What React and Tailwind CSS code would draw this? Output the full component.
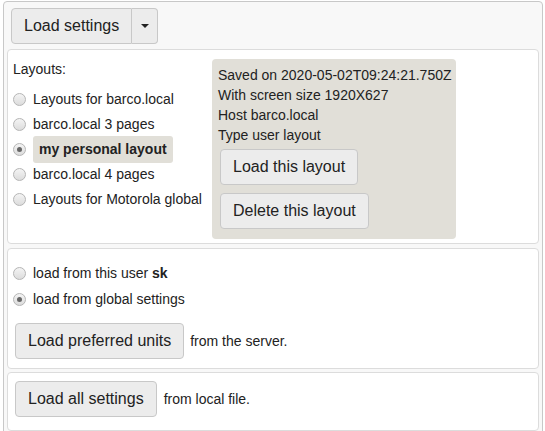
import React, { useState } from 'react';

const Radio = ({ checked }) => (
  <span className="flex h-[13px] w-[13px] shrink-0 items-center justify-center rounded-full border border-[#b5b5b5] bg-gradient-to-b from-[#f4f4f4] to-[#dcdcdc]">
    {checked && <span className="h-[5px] w-[5px] rounded-full bg-[#666]" />}
  </span>
);

const Btn = ({ children, className = '' }) => (
  <button
    className={`h-[36px] whitespace-nowrap rounded-[4px] border border-[#c8c8c8] bg-[#ececec] px-[12px] text-[16px] text-[#222] ${className}`}
  >
    {children}
  </button>
);

const layouts = [
  'Layouts for barco.local',
  'barco.local 3 pages',
  'my personal layout',
  'barco.local 4 pages',
  'Layouts for Motorola global',
];

export default function App() {
  const [sel, setSel] = useState(2);
  const [src, setSrc] = useState(1);

  return (
    <div
      className="ml-[3px] mt-[1px] h-[440px] w-[540px] rounded-[4px] border border-[#c8c8c8] bg-[#f8f8f8] text-[14px] text-[#222]"
      style={{ fontFamily: '"Liberation Sans", Arial, sans-serif' }}
    >
      {/* toolbar */}
      <div className="flex pl-[7px] pt-[6px]">
        <button className="h-[36px] rounded-l-[4px] border border-[#c8c8c8] bg-[#ececec] px-[12px] text-[16px]">
          Load settings
        </button>
        <button className="flex h-[36px] w-[26px] items-center justify-center rounded-r-[4px] border border-l-0 border-[#c8c8c8] bg-[#ececec]">
          <span className="h-0 w-0 border-x-[4px] border-t-[4px] border-x-transparent border-t-[#222]" />
        </button>
      </div>

      {/* layouts */}
      <div className="mx-[3px] mt-[5px] flex h-[195px] rounded-[4px] border border-[#dcdcdc] bg-white pt-[9px]">
        <div className="w-[204px] shrink-0 pl-[5px]">
          <div className="h-[20px] leading-[20px]">Layouts:</div>
          <div className="mt-[8px] flex flex-col">
            {layouts.map((l, i) => (
              <div
                key={l}
                className="flex h-[25px] cursor-pointer items-center gap-[7px] whitespace-nowrap"
                onClick={() => setSel(i)}
              >
                <Radio checked={sel === i} />
                <span
                  className={
                    sel === i
                      ? 'rounded-[3px] bg-[#e1dfd8] px-[6px] py-[4px] font-bold leading-[19px]'
                      : ''
                  }
                >
                  {l}
                </span>
              </div>
            ))}
          </div>
        </div>
        <div className="h-[180px] w-[244px] shrink-0 whitespace-nowrap rounded-[4px] bg-[#e1dfd8] px-[6px] pt-[6px]">
          <div className="leading-[20px]">Saved on 2020-05-02T09:24:21.750Z</div>
          <div className="leading-[20px]">With screen size 1920X627</div>
          <div className="leading-[20px]">Host barco.local</div>
          <div className="leading-[20px]">Type user layout</div>
          <div className="mt-[4px] flex flex-col items-start gap-[8px] pl-[2px]">
            <Btn>Load this layout</Btn>
            <Btn>Delete this layout</Btn>
          </div>
        </div>
      </div>

      {/* preferred units */}
      <div className="mx-[3px] mt-[4px] h-[121px] rounded-[4px] border border-[#dcdcdc] bg-white pl-[5px] pt-[12px]">
        <div className="flex h-[25px] items-center gap-[7px]" onClick={() => setSrc(0)}>
          <Radio checked={src === 0} />
          <span>
            load from this user <b>sk</b>
          </span>
        </div>
        <div className="mt-[1px] flex h-[25px] items-center gap-[7px]" onClick={() => setSrc(1)}>
          <Radio checked={src === 1} />
          <span>load from global settings</span>
        </div>
        <div className="mt-[11px] flex items-center gap-[6px] pl-[2px]">
          <Btn>Load preferred units</Btn>
          <span>from the server.</span>
        </div>
      </div>

      {/* local file */}
      <div className="mx-[3px] mt-[3px] h-[59px] rounded-[4px] border border-[#dcdcdc] bg-white pl-[7px] pt-[8px]">
        <div className="flex items-center gap-[7px]">
          <Btn>Load all settings</Btn>
          <span>from local file.</span>
        </div>
      </div>
    </div>
  );
}
